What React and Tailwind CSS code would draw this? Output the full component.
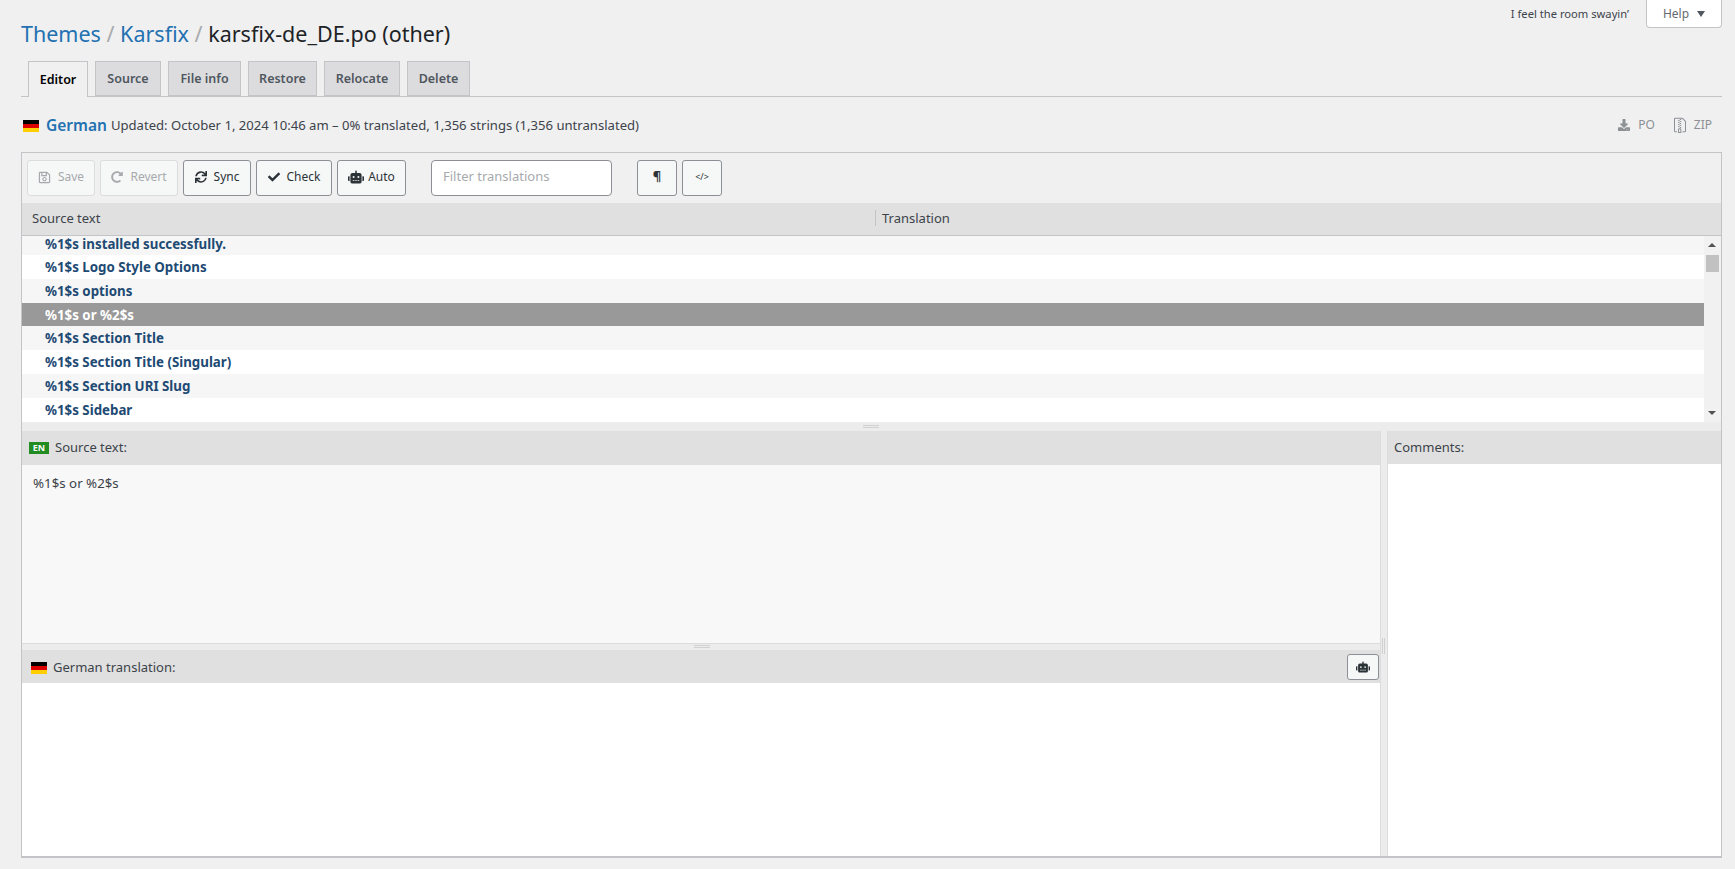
import { FaCheck, FaDownload, FaRobot, FaSync, FaRedoAlt, FaRegSave } from 'react-icons/fa';
import { GoFileZip } from 'react-icons/go';

const tabs = [
    { label: 'Source', width: 'w-[66px]' },
    { label: 'File info', width: 'w-[73px]' },
    { label: 'Restore', width: 'w-[69px]' },
    { label: 'Relocate', width: 'w-[76px]' },
    { label: 'Delete', width: 'w-[63px]' },
];

const rows = [
    '%1$s Logo Style Options',
    '%1$s options',
    '%1$s or %2$s',
    '%1$s Section Title',
    '%1$s Section Title (Singular)',
    '%1$s Section URI Slug',
    '%1$s Sidebar',
];

function Flag({ className = '' }) {
    return (
        <span className={`flex flex-col w-4 h-3 shrink-0 ${className}`}>
            <span className="h-1 bg-black" />
            <span className="h-1 bg-[#dd0000]" />
            <span className="h-1 bg-[#ffce00]" />
        </span>
    );
}

function ToolButton({ icon, label, disabled, className = '' }) {
    return (
        <button className={`flex items-center justify-center gap-[7px] h-[36px] pb-[2px] rounded-[3px] border text-[12px] ${disabled ? 'border-[#dcdcde] bg-[#f6f7f7] text-[#a7aaad]' : 'border-[#8c8f94] bg-[#f6f7f7] text-[#2c3338]'} ${className}`}>
            {icon}
            {label}
        </button>
    );
}

export default function App() {
    return (
        <div className="min-h-screen bg-[#f0f0f1] pl-[21px] pr-[13px] text-[#3c434a] text-[13px] font-['Noto_Sans','Open_Sans',sans-serif]">
            <div className="flex justify-between items-start h-[61px]">
                <h1 className="pt-[19px] text-[21.5px] leading-[29px] text-[#1d2327]">
                    <span className="text-[#2271b1]">Themes</span>
                    <span className="text-[#a7aaad]"> / </span>
                    <span className="text-[#2271b1]">Karsfix</span>
                    <span className="text-[#a7aaad]"> / </span>
                    karsfix-de_DE.po (other)
                </h1>
                <div className="flex items-start">
                    <span className="mt-[6px] mr-[17px] text-[11.2px] leading-[16px] text-[#3c434a]">I feel the room swayin’</span>
                    <button className="flex items-center justify-center gap-[8px] w-[76px] h-[28px] bg-white border border-t-0 border-[#c3c4c7] rounded-b-[4px] text-[12px] text-[#646970]">
                        Help
                        <span className="w-0 h-0 border-x-[4px] border-x-transparent border-t-[6px] border-t-[#50575e]" />
                    </button>
                </div>
            </div>

            <div className="flex gap-[7px] h-[36px] pl-[7px] border-b border-[#c3c4c7]">
                <div className="flex items-center justify-center w-[60px] h-[36px] pt-[1px] bg-[#f0f0f1] border border-b-0 border-[#c3c4c7] text-[12.5px] font-semibold text-black">Editor</div>
                {tabs.map((tab) => (
                    <div key={tab.label} className={`flex items-center justify-center h-[35px] pt-[2px] bg-[#dcdcde] border border-[#c3c4c7] text-[12.5px] font-semibold text-[#50575e] ${tab.width}`}>{tab.label}</div>
                ))}
            </div>

            <div className="flex items-center justify-between h-[55px] pl-[2px] pr-[10px]">
                <div className="flex items-center pt-[3px]">
                    <Flag />
                    <span className="ml-[7px] text-[15.5px] font-semibold text-[#2271b1]">German</span>
                    <span className="ml-[4px] text-[13.1px]">Updated: October 1, 2024 10:46 am – 0% translated, 1,356 strings (1,356 untranslated)</span>
                </div>
                <div className="flex items-center gap-[17px] text-[12px] text-[#8c8f94]">
                    <span className="flex items-center gap-[8px]"><FaDownload size={12} />PO</span>
                    <span className="flex items-center gap-[6px]"><GoFileZip size={16} />ZIP</span>
                </div>
            </div>

            <div className="h-[706px] border border-[#c3c4c7] border-b-2 flex flex-col">
                <div className="flex items-center h-[50px] shrink-0 pl-[5px]">
                    <ToolButton disabled className="w-[68px]" icon={<FaRegSave size={13} />} label="Save" />
                    <ToolButton disabled className="ml-[5px] w-[78px]" icon={<FaRedoAlt size={12} />} label="Revert" />
                    <ToolButton className="ml-[5px] w-[68px]" icon={<FaSync size={12} />} label="Sync" />
                    <ToolButton className="ml-[5px] w-[76px]" icon={<FaCheck size={12} />} label="Check" />
                    <ToolButton className="ml-[5px] w-[69px] !gap-[4px]" icon={<FaRobot size={16} />} label="Auto" />
                    <input
                        readOnly
                        placeholder="Filter translations"
                        className="ml-[25px] w-[181px] h-[36px] px-[11px] pb-[5px] bg-white border border-[#8c8f94] rounded-[4px] text-[13px] placeholder:text-[#a7aaad] outline-none"
                    />
                    <ToolButton className="ml-[25px] w-[40px] font-bold text-[13px]" label="¶" />
                    <ToolButton className="ml-[5px] w-[40px] !text-[9px]" label="</>" />
                </div>

                <div className="flex items-center h-[33px] shrink-0 pb-[3px] bg-[#e0e0e0] border-b border-[#c3c4c7] text-[13px] leading-[16px] text-[#3c434a]">
                    <span className="pl-[10px] w-[853px]">Source text</span>
                    <span className="pl-[6px] border-l border-[#c3c4c7]">Translation</span>
                </div>

                <div className="flex h-[186px] shrink-0 bg-[#f0f0f1]">
                    <div className="flex-1 text-[13.3px] font-bold text-[#1e4a73]">
                        <div className="h-[19px] leading-[17px] pl-[23px] bg-[#f6f6f6]">%1$s installed successfully.</div>
                        {rows.map((row, i) => (
                            <div key={row} className={`h-[23.8px] leading-[25px] pl-[23px] overflow-hidden ${i === 2 ? 'bg-[#999999] text-white' : i % 2 === 0 ? 'bg-white' : 'bg-[#f6f6f6]'}`}>{row}</div>
                        ))}
                    </div>
                    <div className="relative w-[17px] bg-[#f1f1f1] shrink-0">
                        <span className="absolute left-[4px] top-[7px] w-0 h-0 border-x-[4px] border-x-transparent border-b-[4px] border-b-[#505050]" />
                        <span className="absolute left-[2px] top-[19px] w-[13px] h-[17px] bg-[#c1c1c1]" />
                        <span className="absolute left-[4px] bottom-[7px] w-0 h-0 border-x-[4px] border-x-transparent border-t-[4px] border-t-[#505050]" />
                    </div>
                </div>

                <div className="relative h-[9px] shrink-0 bg-[#ececec]">
                    <span className="absolute left-[841px] top-[3px] w-[16px] h-[3px] border-y border-[#d0d0d0]" />
                </div>

                <div className="flex flex-1 min-h-0">
                    <div className="flex flex-col w-[1359px] border-r border-[#dcdcde]">
                        <div className="flex items-center h-[34px] shrink-0 pl-[7px] bg-[#e0e0e0] text-[13px]">
                            <span className="flex items-center justify-center w-[20px] h-[12px] bg-[#228b22] text-white text-[9px] font-bold">EN</span>
                            <span className="ml-[6px]">Source text:</span>
                        </div>
                        <div className="h-[178px] shrink-0 pl-[11px] pt-[9px] bg-[#f8f8f8] text-[13.3px] leading-[19px]">%1$s or %2$s</div>
                        <div className="relative h-[7px] shrink-0 bg-[#ececec] border-t border-[#dcdcde]">
                            <span className="absolute left-[672px] top-[1px] w-[16px] h-[3px] border-y border-[#d0d0d0]" />
                        </div>
                        <div className="flex items-center justify-between h-[33px] shrink-0 pl-[9px] pr-[1px] bg-[#e0e0e0] text-[13px]">
                            <span className="flex items-center gap-[6px] pt-[2px]"><Flag />German translation:</span>
                            <ToolButton className="w-[32px] !h-[26px] !pb-0 !text-[#2c3338]" icon={<FaRobot size={14} />} />
                        </div>
                        <div className="flex-1 bg-white" />
                    </div>
                    <div className="relative w-[6px] shrink-0 bg-[#ececec]">
                        <span className="absolute left-[1px] top-[207px] w-[3px] h-[16px] border-x border-[#d0d0d0]" />
                    </div>
                    <div className="flex flex-col flex-1 border-l border-[#dcdcde]">
                        <div className="flex items-center h-[33px] shrink-0 pl-[6px] bg-[#e0e0e0] text-[13px]">Comments:</div>
                        <div className="flex-1 bg-white" />
                    </div>
                </div>
            </div>
        </div>
    );
}
